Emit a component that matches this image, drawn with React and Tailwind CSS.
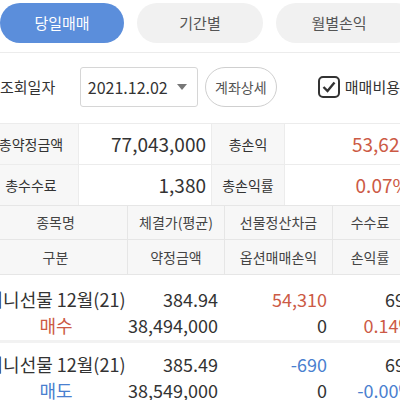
import React from 'react'

const red = 'text-[#cc5a45]'
const blue = 'text-[#4a7fcf]'

function Tabs() {
    return (
        <div className="flex gap-[13px] pt-[3px] pb-[9px] border-b border-[#ececec]">
            <div className="w-[124px] h-[40px] shrink-0 rounded-full bg-[#5b8edb] text-white text-[15px] flex items-center justify-center">당일매매</div>
            <div className="w-[126px] h-[40px] shrink-0 rounded-full bg-[#f1f1f1] text-[#555] text-[15px] flex items-center justify-center">기간별</div>
            <div className="w-[140px] h-[40px] shrink-0 rounded-full bg-[#f1f1f1] text-[#555] text-[15px] flex items-center justify-center pr-[14px]">월별손익</div>
        </div>
    )
}

function Filters() {
    return (
        <div className="flex items-center pt-[14px] h-[54px]">
            <div className="w-[80px] text-[15px] text-[#333] whitespace-nowrap">조회일자</div>
            <div className="w-[118px] h-[40px] shrink-0 border border-[#d6d6d6] rounded-[3px] flex items-center justify-between pl-[7px] pr-[10px]">
                <span className="text-[16px] text-[#333]">2021.12.02</span>
                <svg width="10" height="6" viewBox="0 0 10 6"><path d="M0 0h10L5 6z" fill="#777" /></svg>
            </div>
            <div className="ml-[7px] w-[72px] h-[40px] shrink-0 rounded-full border border-[#cfcfcf] flex items-center justify-center text-[14px] text-[#555]">계좌상세</div>
            <div className="ml-[41px] w-[22px] h-[22px] shrink-0 border-2 border-[#333] rounded-[5px] flex items-center justify-center">
                <svg width="14" height="12" viewBox="0 0 14 12"><path d="M1.5 6l4 4 7-8.5" fill="none" stroke="#333" strokeWidth="2.4" /></svg>
            </div>
            <div className="ml-[5px] text-[15px] text-[#333] whitespace-nowrap">매매비용</div>
        </div>
    )
}

function Summary() {
    const label = "bg-[#f7f7f7] flex items-center justify-center text-[14px] text-[#333] border-r border-[#ececec] whitespace-nowrap"
    const value = "flex items-center justify-end text-[19px] text-[#333] border-r border-[#ececec] whitespace-nowrap"
    return (
        <div className="mt-[16px] w-[420px] grid grid-cols-[79px_133px_73px_135px] border-t border-[#ececec]">
            <div className={label + " h-[41px] pr-[16px] border-b"}>총약정금액</div>
            <div className={value + " h-[41px] pr-[5px] border-b"}>77,043,000</div>
            <div className={label + " h-[41px] border-b"}>총손익</div>
            <div className={value + " h-[41px] pr-[9px] border-b " + red}>53,620</div>
            <div className={label + " h-[40px] pr-[16px]"}>총수수료</div>
            <div className={value + " h-[40px] pr-[5px]"}>1,380</div>
            <div className={label + " h-[40px]"}>총손익률</div>
            <div className={value + " h-[40px] pr-[9px] " + red}>0.07%</div>
        </div>
    )
}

function HeaderTable() {
    const cell = "h-[34px] flex items-center justify-center text-[14px] text-[#444] border-r border-[#e6e6e6] whitespace-nowrap"
    return (
        <div className="w-[420px] grid grid-cols-[128px_97px_108px_87px] bg-[#f7f7f7] border-t border-b border-[#e6e6e6]">
            <div className={cell + " pr-[16px] border-b"}>종목명</div>
            <div className={cell + " border-b"}>체결가(평균)</div>
            <div className={cell + " border-b"}>선물정산차금</div>
            <div className={cell + " border-b pr-[12px]"}>수수료</div>
            <div className={cell + " pr-[16px]"}>구분</div>
            <div className={cell}>약정금액</div>
            <div className={cell}>옵션매매손익</div>
            <div className={cell + " pr-[12px]"}>손익률</div>
        </div>
    )
}

function TradeRow({ price, amount, settle, settleColor, fee, side, sideColor, rate, rateColor, top }) {
    const line = "h-[26px] flex items-center whitespace-nowrap text-[18px]"
    return (
        <div className={"w-[420px] grid grid-cols-[128px_97px_108px_87px] border-b-[3px] border-[#f2f2f2] text-[#333] " + top}>
            <div className="pr-[16px]">
                <div className={line + " justify-center"}>미니선물 12월(21)</div>
                <div className={line + " justify-center " + sideColor}>{side}</div>
            </div>
            <div className="pr-[7px]">
                <div className={line + " justify-end"}>{price}</div>
                <div className={line + " justify-end"}>{amount}</div>
            </div>
            <div className="pr-[6px]">
                <div className={line + " justify-end " + settleColor}>{settle}</div>
                <div className={line + " justify-end"}>0</div>
            </div>
            <div className="pr-[5px]">
                <div className={line + " justify-end"}>{fee}</div>
                <div className={line + " justify-end " + rateColor}>{rate}</div>
            </div>
        </div>
    )
}

export default function App() {
    return (
        <div className="w-[400px] h-[400px] overflow-hidden bg-white" style={{ fontFamily: '"Noto Sans CJK KR", "Noto Sans", sans-serif' }}>
            <Tabs />
            <Filters />
            <Summary />
            <HeaderTable />
            <TradeRow top="pt-[11px] pb-[2px]" price="384.94" amount="38,494,000" settle="54,310" settleColor={red} fee="690" side="매수" sideColor={red} rate="0.14%" rateColor={red} />
            <TradeRow top="pt-[8px] pb-[8px]" price="385.49" amount="38,549,000" settle="-690" settleColor={blue} fee="690" side="매도" sideColor={blue} rate="-0.00%" rateColor={blue} />
        </div>
    )
}
